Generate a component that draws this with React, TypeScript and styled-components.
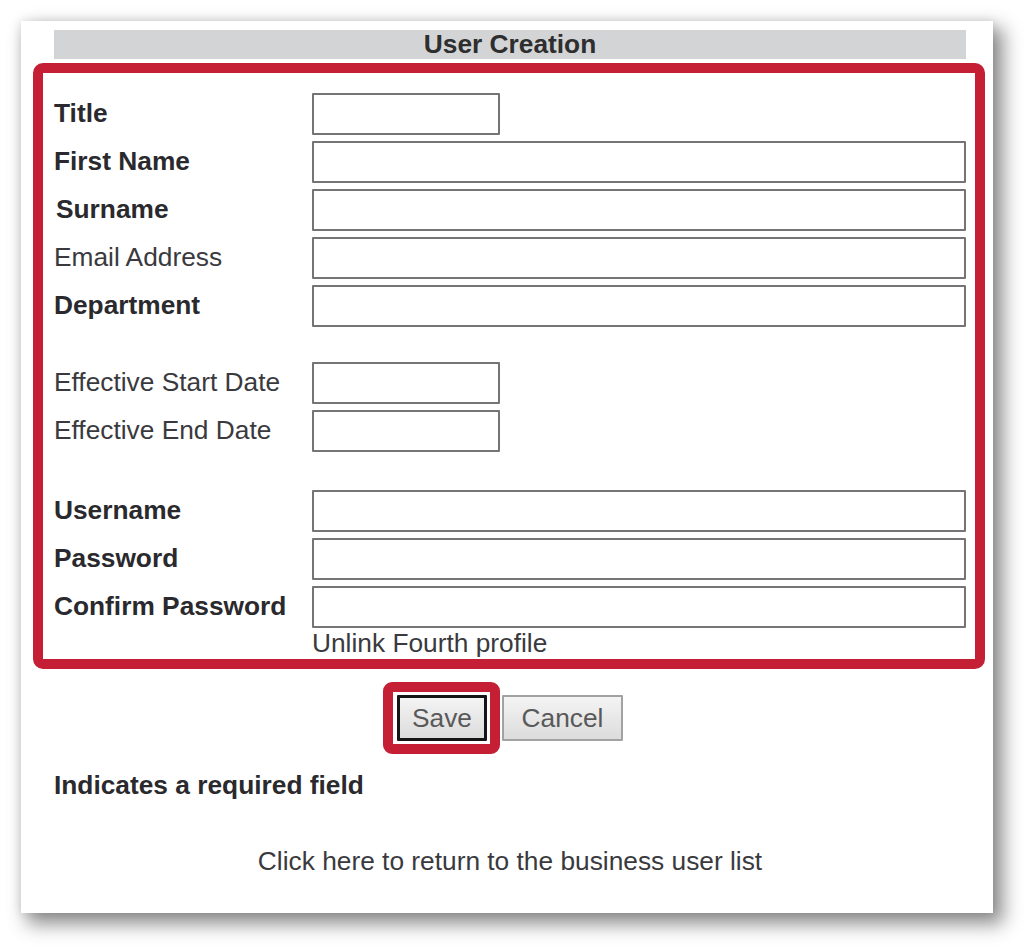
import React from "react";
import styled, { createGlobalStyle } from "styled-components";

const GlobalStyle = createGlobalStyle`
  html, body {
    margin: 0;
    padding: 0;
    background: #ffffff;
  }
  body {
    font-family: "Liberation Sans", Arial, sans-serif;
  }
  * { box-sizing: border-box; }
`;

const Page = styled.div`
  padding: 21px 0 0 21px;
  width: 1028px;
  height: 947px;
  overflow: hidden;
`;

const Card = styled.div`
  width: 972px;
  background: #ffffff;
  padding: 9px 27px 37px 33px;
  display: flex;
  flex-direction: column;
  box-shadow: 8px 9px 18px 2px rgba(0, 0, 0, 0.45), 0 0 9px rgba(0, 0, 0, 0.1);
`;

const Header = styled.div`
  height: 29px;
  background: #d3d4d6;
  color: #2e2e2e;
  font-size: 26.3px;
  font-weight: bold;
  line-height: 29px;
  text-align: center;
`;

const RedFrame = styled.div`
  margin: 4px -19px 0 -21px;
  border: 10px solid #c41f35;
  border-radius: 10px;
  padding: 20px 9px 1px 11px;
`;

const FormGrid = styled.div`
  display: grid;
  grid-template-columns: 258px 1fr;
  row-gap: 6px;
  align-items: center;
`;

const Label = styled.label<{ $bold?: boolean; $indent?: number }>`
  font-size: 26.3px;
  line-height: 30px;
  font-weight: ${(p) => (p.$bold ? "bold" : "normal")};
  color: ${(p) => (p.$bold ? "#2a2a2e" : "#3a3a3e")};
  padding-left: ${(p) => p.$indent ?? 0}px;
  margin-top: -3px;
  white-space: nowrap;
`;

const Field = styled.input<{ $short?: boolean }>`
  display: block;
  width: ${(p) => (p.$short ? "188px" : "100%")};
  height: 42px;
  border: 2px solid #747474;
  border-radius: 1px;
  background: #ffffff;
  padding: 0 6px;
  font-size: 22px;
  font-family: "Liberation Sans", Arial, sans-serif;
  outline: none;
`;

const Spacer = styled.div<{ $h: number }>`
  grid-column: 1 / -1;
  height: ${(p) => p.$h}px;
`;

const Unlink = styled.div`
  grid-column: 2;
  margin-top: -6px;
  font-size: 26.3px;
  line-height: 30px;
  color: #3a3a3e;
`;

const ButtonRow = styled.div`
  margin-top: 26px;
  display: flex;
  justify-content: center;
  gap: 15px;
`;

const Annotated = styled.div`
  position: relative;
  display: flex;
`;

const AnnotationRing = styled.div`
  position: absolute;
  inset: -13px -13px -13px -14px;
  border: 10px solid #c41f35;
  border-radius: 9px;
  pointer-events: none;
`;

const Button = styled.button<{ $focused?: boolean; $w: number }>`
  width: ${(p) => p.$w}px;
  height: 46px;
  padding: 0;
  font-family: "Liberation Sans", Arial, sans-serif;
  font-size: 26.3px;
  color: #595959;
  background: linear-gradient(#f4f4f4, #dcdcdc);
  border: ${(p) => (p.$focused ? "3px solid #151515" : "2px solid #a2a2a2")};
  border-radius: 1px;
  cursor: pointer;
`;

const Required = styled.div`
  margin-top: 29px;
  font-size: 26.3px;
  line-height: 30px;
  font-weight: bold;
  color: #2a2a2e;
`;

const BackLink = styled.div`
  margin-top: 46px;
  font-size: 26.3px;
  line-height: 30px;
  color: #3a3a3e;
  text-align: center;
`;

type Row = { label: string; bold?: boolean; short?: boolean; indent?: number; type?: string };

const groupA: Row[] = [
  { label: "Title", bold: true, short: true },
  { label: "First Name", bold: true },
  { label: "Surname", bold: true, indent: 2 },
  { label: "Email Address" },
  { label: "Department", bold: true },
];

const groupB: Row[] = [
  { label: "Effective Start Date", short: true },
  { label: "Effective End Date", short: true },
];

const groupC: Row[] = [
  { label: "Username", bold: true },
  { label: "Password", bold: true, type: "password" },
  { label: "Confirm Password", bold: true, type: "password" },
];

const renderRows = (rows: Row[]) =>
  rows.map((r) => (
    <React.Fragment key={r.label}>
      <Label $bold={r.bold} $indent={r.indent}>
        {r.label}
      </Label>
      <Field $short={r.short} type={r.type ?? "text"} />
    </React.Fragment>
  ));

export default function App() {
  return (
    <>
      <GlobalStyle />
      <Page>
        <Card>
          <Header>User Creation</Header>
          <RedFrame>
            <FormGrid>
              {renderRows(groupA)}
              <Spacer $h={23} />
              {renderRows(groupB)}
              <Spacer $h={26} />
              {renderRows(groupC)}
              <Unlink>Unlink Fourth profile</Unlink>
            </FormGrid>
          </RedFrame>
          <ButtonRow>
            <Annotated>
              <Button $focused $w={90}>Save</Button>
              <AnnotationRing />
            </Annotated>
            <Button $w={121}>Cancel</Button>
          </ButtonRow>
          <Required>Indicates a required field</Required>
          <BackLink>Click here to return to the business user list</BackLink>
        </Card>
      </Page>
    </>
  );
}
